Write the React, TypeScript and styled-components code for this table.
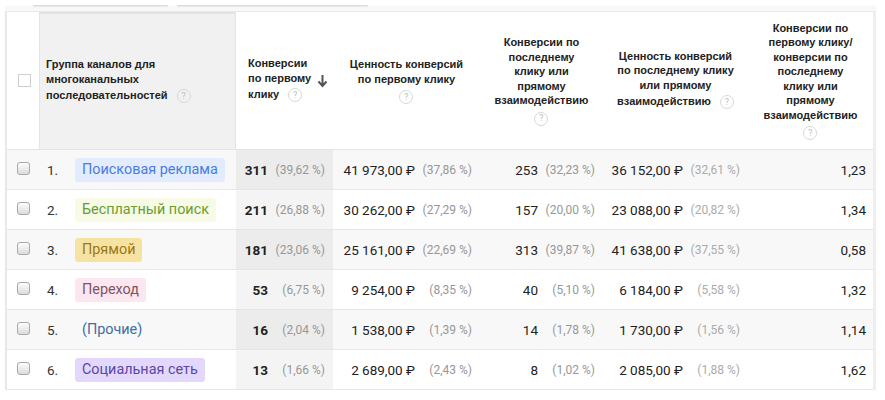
import React from "react";
import styled, { createGlobalStyle, css } from "styled-components";

const GlobalStyle = createGlobalStyle`
  html, body { margin: 0; padding: 0; background: #fff; }
  body { font-family: Roboto, "Liberation Sans", Arial, sans-serif; color: #222; }
`;

const COLS = "32px 197px 97px 147px 123px 145px 125px";

const Page = styled.div`
  width: 885px;
  height: 400px;
  padding-left: 5px;
  box-sizing: border-box;
  overflow: hidden;
`;

const TopBar = styled.div`
  width: 871px;
  height: 11px;
  display: flex;
  align-items: flex-start;
  border-bottom: 1px solid #e9e9e9;
  background: linear-gradient(#fff 0, #fff 5px, #f8f8f8 6px, #f8f8f8 11px);
`;

const TabEdge = styled.div<{ $ml: number; $w: number }>`
  margin-left: ${(p) => p.$ml}px;
  width: ${(p) => p.$w}px;
  height: 2px;
  margin-top: 5px;
  background: linear-gradient(#d9d9d9, #ececec);
  border-radius: 0 0 1px 1px;
`;

const Table = styled.div`
  width: 866px;
  border-left: 2px solid #e8e8e8;
  border-right: 3px solid #eeeeee;
`;

const HeadRow = styled.div`
  display: grid;
  grid-template-columns: ${COLS};
  height: 138px;
  border-bottom: 1px solid #e4e4e4;
  box-sizing: border-box;
`;

const HeadCell = styled.div<{ $align?: "left" | "center"; $shaded?: boolean; $pl?: number }>`
  display: flex;
  align-items: center;
  justify-content: ${(p) => (p.$align === "left" ? "flex-start" : "center")};
  text-align: ${(p) => (p.$align === "left" ? "left" : "center")};
  padding-left: ${(p) => p.$pl ?? 0}px;
  font-family: "Liberation Sans", Arial, sans-serif;
  font-weight: bold;
  font-size: 11px;
  line-height: 14.5px;
  color: #222;
  ${(p) =>
    p.$shaded &&
    css`
      background: #f1f1f1;
      border-left: 1px solid #e4e4e4;
      border-right: 1px solid #e4e4e4;
      border-top: 2px solid #e2e2e2;
    `}
`;

const HeadText = styled.div`
  white-space: nowrap;
`;

const Line = styled.div``;

const HelpIcon = styled.span<{ $block?: boolean }>`
  display: ${(p) => (p.$block ? "flex" : "inline-flex")};
  align-items: center;
  justify-content: center;
  width: 14px;
  height: 14px;
  box-sizing: border-box;
  border: 1px solid #d8d8d8;
  border-radius: 50%;
  font-family: Roboto, Arial, sans-serif;
  font-weight: normal;
  font-size: 9px;
  line-height: 1;
  color: #bdbdbd;
  vertical-align: middle;
  margin: ${(p) => (p.$block ? "4px auto 0" : "3px 0 3px 6px")};
`;

const SortArrow = styled.svg`
  margin-left: 6px;
  flex: none;
`;

const HeadCheck = styled.span`
  width: 13px;
  height: 13px;
  box-sizing: border-box;
  border: 1px solid #cfcfcf;
  background: #fff;
  margin-left: 3px;
`;

const BodyRow = styled.div<{ $odd: boolean }>`
  display: grid;
  grid-template-columns: ${COLS};
  height: 40px;
  box-sizing: border-box;
  border-bottom: 1px solid #e6e6e6;
  background: ${(p) => (p.$odd ? "#f8f8f8" : "#ffffff")};
`;

const CheckCell = styled.div`
  display: flex;
  align-items: center;
  justify-content: center;
  padding-left: 1px;
  padding-bottom: 2px;
`;

const RowCheck = styled.span`
  width: 13px;
  height: 13px;
  box-sizing: border-box;
  border: 1px solid #a9a9a9;
  border-radius: 3px;
  background: linear-gradient(#fdfdfd, #dcdcdc);
`;

const GroupCell = styled.div`
  display: flex;
  align-items: center;
  padding-left: 8px;
`;

const RowNum = styled.span`
  width: 28px;
  font-size: 13.5px;
  color: #333;
`;

const PILL_THEMES: Record<string, { bg: string; fg: string }> = {
  blue: { bg: "#e2ecfe", fg: "#4a7ddf" },
  green: { bg: "#f7fbe6", fg: "#6a9b35" },
  gold: { bg: "#f6e3a2", fg: "#9c7817" },
  pink: { bg: "#fce6ef", fg: "#7f5466" },
  none: { bg: "transparent", fg: "#3e6fa3" },
  violet: { bg: "#e3d8fb", fg: "#5b48a3" },
};

const Pill = styled.span<{ $tone: string }>`
  display: inline-flex;
  align-items: center;
  height: 24px;
  padding: 0 7px;
  border-radius: 3px;
  font-size: 14.4px;
  background: ${(p) => PILL_THEMES[p.$tone].bg};
  color: ${(p) => PILL_THEMES[p.$tone].fg};
`;

const MetricCell = styled.div<{ $sorted?: boolean; $odd?: boolean }>`
  display: flex;
  align-items: center;
  justify-content: flex-end;
  padding-right: 8px;
  ${(p) =>
    p.$sorted &&
    css`
      background: ${p.$odd ? "#ececec" : "#f4f4f4"};
    `}
`;

const Value = styled.span<{ $bold?: boolean }>`
  font-size: 13.5px;
  color: #222;
  font-weight: ${(p) => (p.$bold ? 700 : 400)};
  white-space: nowrap;
`;

const Pct = styled.span<{ $light?: boolean }>`
  min-width: 51px;
  margin-left: 6px;
  text-align: right;
  font-size: 12px;
  white-space: nowrap;
  color: ${(p) => (p.$light ? "#ababab" : "#979797")};
`;

const RatioCell = styled.div`
  display: flex;
  align-items: center;
  justify-content: flex-end;
  padding-right: 7px;
  font-size: 13.5px;
  color: #222;
`;

type Row = {
  name: string;
  tone: string;
  a: [string, string];
  b: [string, string];
  c: [string, string];
  d: [string, string];
  e: string;
};

const N = "\u00a0";
const P = "\u00a0%";

const rows: Row[] = [
  { name: "Поисковая реклама", tone: "blue", a: ["311", "39,62"], b: [`41${N}973,00${N}₽`, "37,86"], c: ["253", "32,23"], d: [`36${N}152,00${N}₽`, "32,61"], e: "1,23" },
  { name: "Бесплатный поиск", tone: "green", a: ["211", "26,88"], b: [`30${N}262,00${N}₽`, "27,29"], c: ["157", "20,00"], d: [`23${N}088,00${N}₽`, "20,82"], e: "1,34" },
  { name: "Прямой", tone: "gold", a: ["181", "23,06"], b: [`25${N}161,00${N}₽`, "22,69"], c: ["313", "39,87"], d: [`41${N}638,00${N}₽`, "37,55"], e: "0,58" },
  { name: "Переход", tone: "pink", a: ["53", "6,75"], b: [`9${N}254,00${N}₽`, "8,35"], c: ["40", "5,10"], d: [`6${N}184,00${N}₽`, "5,58"], e: "1,32" },
  { name: "(Прочие)", tone: "none", a: ["16", "2,04"], b: [`1${N}538,00${N}₽`, "1,39"], c: ["14", "1,78"], d: [`1${N}730,00${N}₽`, "1,56"], e: "1,14" },
  { name: "Социальная сеть", tone: "violet", a: ["13", "1,66"], b: [`2${N}689,00${N}₽`, "2,43"], c: ["8", "1,02"], d: [`2${N}085,00${N}₽`, "1,88"], e: "1,62" },
];

const Help = ({ block }: { block?: boolean }) => <HelpIcon $block={block}>?</HelpIcon>;

export default function App() {
  return (
    <>
      <GlobalStyle />
      <Page>
        <TopBar>
          <TabEdge $ml={28} $w={135} />
          <TabEdge $ml={9} $w={191} />
        </TopBar>
        <Table>
          <HeadRow>
            <HeadCell>
              <HeadCheck />
            </HeadCell>
            <HeadCell $align="left" $shaded $pl={6}>
              <HeadText>
                <Line>Группа каналов для</Line>
                <Line>многоканальных</Line>
                <Line>
                  последовательностей <Help />
                </Line>
              </HeadText>
            </HeadCell>
            <HeadCell $align="left" $pl={12}>
              <HeadText>
                <Line>Конверсии</Line>
                <Line>по первому</Line>
                <Line>
                  клику <Help />
                </Line>
              </HeadText>
              <SortArrow width="11" height="14" viewBox="0 0 11 14">
                <path d="M5.5 1 V12 M1.5 7.5 L5.5 12 L9.5 7.5" fill="none" stroke="#555" strokeWidth="2" />
              </SortArrow>
            </HeadCell>
            <HeadCell>
              <HeadText>
                <Line>Ценность конверсий</Line>
                <Line>по первому клику</Line>
                <Help block />
              </HeadText>
            </HeadCell>
            <HeadCell>
              <HeadText>
                <Line>Конверсии по</Line>
                <Line>последнему</Line>
                <Line>клику или</Line>
                <Line>прямому</Line>
                <Line>взаимодействию</Line>
                <Help block />
              </HeadText>
            </HeadCell>
            <HeadCell>
              <HeadText>
                <Line>Ценность конверсий</Line>
                <Line>по последнему клику</Line>
                <Line>или прямому</Line>
                <Line>
                  взаимодействию <Help />
                </Line>
              </HeadText>
            </HeadCell>
            <HeadCell>
              <HeadText>
                <Line>Конверсии по</Line>
                <Line>первому клику/</Line>
                <Line>конверсии по</Line>
                <Line>последнему</Line>
                <Line>клику или</Line>
                <Line>прямому</Line>
                <Line>взаимодействию</Line>
                <Help block />
              </HeadText>
            </HeadCell>
          </HeadRow>
          {rows.map((r, i) => {
            const odd = i % 2 === 0;
            return (
              <BodyRow key={r.name} $odd={odd}>
                <CheckCell>
                  <RowCheck />
                </CheckCell>
                <GroupCell>
                  <RowNum>{i + 1}.</RowNum>
                  <Pill $tone={r.tone}>{r.name}</Pill>
                </GroupCell>
                <MetricCell $sorted $odd={odd}>
                  <Value $bold>{r.a[0]}</Value>
                  <Pct>({r.a[1]}{P})</Pct>
                </MetricCell>
                <MetricCell>
                  <Value>{r.b[0]}</Value>
                  <Pct>({r.b[1]}{P})</Pct>
                </MetricCell>
                <MetricCell>
                  <Value>{r.c[0]}</Value>
                  <Pct>({r.c[1]}{P})</Pct>
                </MetricCell>
                <MetricCell>
                  <Value>{r.d[0]}</Value>
                  <Pct $light>({r.d[1]}{P})</Pct>
                </MetricCell>
                <RatioCell>{r.e}</RatioCell>
              </BodyRow>
            );
          })}
        </Table>
      </Page>
    </>
  );
}
